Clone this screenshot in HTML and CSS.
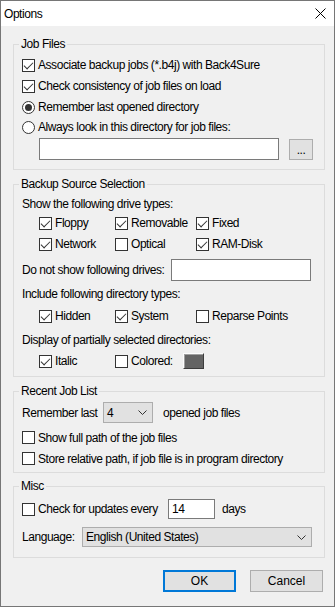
FILE: index.html
```html
<!DOCTYPE html>
<html lang="en">
<head>
    <meta charset="UTF-8">
    <meta name="viewport" content="width=device-width, initial-scale=1.0">
    <title>Options</title>
    <link rel="stylesheet" href="styles.css">
</head>
<body>
    <div class="window">
        <div class="titlebar">
            <span class="title">Options</span>
            <svg class="close" width="11" height="11" viewBox="0 0 11 11">
                <path d="M0.5 0.5 L10.5 10.5 M10.5 0.5 L0.5 10.5" stroke="#000" stroke-width="1" fill="none"/>
            </svg>
        </div>
        <div class="body">
            <fieldset class="group g-job">
                <legend>Job Files</legend>
                <div class="row"><span class="cb on"></span>Associate backup jobs (*.b4j) with Back4Sure</div>
                <div class="row gap1"><span class="cb on"></span>Check consistency of job files on load</div>
                <div class="row gap1"><span class="rb on"></span>Remember last opened directory</div>
                <div class="row"><span class="rb"></span>Always look in this directory for job files:</div>
                <div class="dir-row">
                    <span class="edit dir-edit"></span>
                    <span class="btn dots">...</span>
                </div>
            </fieldset>

            <fieldset class="group g-src">
                <legend>Backup Source Selection</legend>
                <div class="lbl first">Show the following drive types:</div>
                <div class="opt-grid drive-grid">
                    <div class="row"><span class="cb on"></span>Floppy</div>
                    <div class="row"><span class="cb on"></span>Removable</div>
                    <div class="row"><span class="cb on"></span>Fixed</div>
                    <div class="row"><span class="cb on"></span>Network</div>
                    <div class="row"><span class="cb"></span>Optical</div>
                    <div class="row"><span class="cb on"></span>RAM-Disk</div>
                </div>
                <div class="drives-row">
                    <span>Do not show following drives:</span>
                    <span class="edit drives-edit"></span>
                </div>
                <div class="lbl">Include following directory types:</div>
                <div class="opt-grid dir-grid">
                    <div class="row"><span class="cb on"></span>Hidden</div>
                    <div class="row"><span class="cb on"></span>System</div>
                    <div class="row"><span class="cb"></span>Reparse Points</div>
                </div>
                <div class="lbl">Display of partially selected directories:</div>
                <div class="opt-grid disp-grid">
                    <div class="row"><span class="cb on"></span>Italic</div>
                    <div class="row"><span class="cb"></span>Colored:<span class="swatch"></span></div>
                </div>
            </fieldset>

            <fieldset class="group g-recent">
                <legend>Recent Job List</legend>
                <div class="remember-row">
                    <span>Remember last</span>
                    <span class="combo count-combo">4
                        <svg class="chev" width="9" height="5" viewBox="0 0 9 5"><path d="M0.5 0.5 L4.5 4.5 L8.5 0.5" stroke="#333" fill="none"/></svg>
                    </span>
                    <span>opened job files</span>
                </div>
                <div class="row r21 gap4"><span class="cb"></span>Show full path of the job files</div>
                <div class="row r21"><span class="cb"></span>Store relative path, if job file is in program directory</div>
            </fieldset>

            <fieldset class="group g-misc">
                <legend>Misc</legend>
                <div class="update-row">
                    <span class="cb"></span>
                    <span>Check for updates every</span>
                    <span class="edit days-edit">14</span>
                    <span>days</span>
                </div>
                <div class="lang-row">
                    <span>Language:</span>
                    <span class="combo lang-combo">English (United States)
                        <svg class="chev" width="9" height="5" viewBox="0 0 9 5"><path d="M0.5 0.5 L4.5 4.5 L8.5 0.5" stroke="#333" fill="none"/></svg>
                    </span>
                </div>
            </fieldset>

            <div class="actions">
                <span class="btn push default">OK</span>
                <span class="btn push">Cancel</span>
            </div>
        </div>
    </div>
</body>
</html>
```

FILE: styles.css
```css
body {
    margin: 0;
    font-family: "Liberation Sans", Arial, sans-serif;
    font-size: 12px;
    letter-spacing: -0.45px;
    line-height: 16px;
    color: #000;
    background: #fff;
    white-space: nowrap;
}
.window {
    width: 335px;
    height: 607px;
    box-sizing: border-box;
    border: 1px solid #767676;
    background: #f0f0f0;
}
.titlebar {
    height: 25px;
    background: #fff;
    display: flex;
    align-items: center;
    justify-content: space-between;
    padding-left: 3px;
}
.title {
    font-size: 12px;
}
.close {
    margin-right: 8px;
}
.body {
    padding: 0 9px 0 12px;
}
.group {
    width: 312px;
    box-sizing: border-box;
    margin: 10px 0 0 0;
    padding: 0 8px;
    border: 1px solid #dcdcdc;
    min-width: 0;
}
.group legend {
    padding: 0 2px;
    margin-left: -3px;
    line-height: 16px;
}
.row {
    height: 20px;
    display: flex;
    align-items: center;
}
.row.gap1 {
    margin-top: 1px;
}
.row.r21 {
    height: 21px;
}
.row.gap4 {
    margin-top: 4px;
}
.cb, .rb {
    width: 13px;
    height: 13px;
    box-sizing: border-box;
    border: 1px solid #333;
    background: #fff;
    position: relative;
    flex: none;
    margin-right: 3px;
}
.cb.on::after {
    content: "";
    position: absolute;
    left: 3px;
    top: 0px;
    width: 4px;
    height: 8px;
    border: solid #333;
    border-width: 0 1px 1px 0;
    transform: rotate(45deg);
}
.rb {
    border-radius: 50%;
}
.rb.on::after {
    content: "";
    position: absolute;
    left: 2px;
    top: 2px;
    width: 7px;
    height: 7px;
    border-radius: 50%;
    background: #333;
}
.edit {
    display: block;
    box-sizing: border-box;
    background: #fff;
    border: 1px solid #7a7a7a;
}
.btn {
    display: flex;
    align-items: center;
    justify-content: center;
    box-sizing: border-box;
    background: #e1e1e1;
    border: 1px solid #adadad;
}

/* job files */
.g-job {
    padding-top: 3px;
    padding-bottom: 9px;
}
.dir-row {
    display: flex;
    align-items: flex-start;
    margin-top: 1px;
    padding-left: 17px;
}
.dir-edit {
    width: 240px;
    height: 22px;
}
.dots {
    width: 24px;
    height: 21px;
    margin: 1px 0 0 10px;
}

/* backup source */
.g-src {
    margin-top: 6px;
    padding-top: 2px;
    padding-bottom: 4px;
}
.lbl {
    height: 20px;
    display: flex;
    align-items: center;
    margin-top: 3px;
}
.lbl.first {
    height: 19px;
    margin-top: 0;
}
.opt-grid {
    display: grid;
    grid-template-columns: 76px 81px auto;
    grid-auto-rows: 21px;
    margin-left: 17px;
}
.dir-grid {
    margin-top: 2px;
}
.disp-grid {
    margin-top: 1px;
}
.drives-row {
    display: flex;
    align-items: center;
    justify-content: space-between;
    height: 22px;
    margin-top: 4px;
}
.drives-edit {
    width: 140px;
    height: 22px;
    margin-right: 5px;
}
.swatch {
    flex: none;
    width: 21px;
    height: 16px;
    box-sizing: border-box;
    margin-left: 10px;
    background: #646464;
    border: 1px solid;
    border-color: #fdfdfd #3c3c3c #3c3c3c #fdfdfd;
    box-shadow: inset 1px 1px 0 #a0a0a0;
}

/* recent jobs */
.g-recent {
    margin-top: 6px;
    padding-top: 3px;
    padding-bottom: 3px;
}
.remember-row {
    display: flex;
    align-items: center;
    height: 21px;
}
.combo {
    display: flex;
    align-items: center;
    justify-content: space-between;
    box-sizing: border-box;
    background: #e1e1e1;
    border: 1px solid #adadad;
    padding: 0 5px 0 3px;
}
.count-combo {
    width: 50px;
    height: 21px;
    margin: 0 10px 0 0;
}
.remember-row > span:first-child {
    width: 81px;
}
.chev {
    flex: none;
}

/* misc */
.g-misc {
    margin-top: 5px;
    padding-top: 5px;
    padding-bottom: 10px;
}
.update-row {
    display: flex;
    align-items: center;
    height: 20px;
}
.update-row > span:nth-child(2) {
    width: 130px;
}
.days-edit {
    width: 47px;
    height: 20px;
    padding-left: 3px;
    margin-right: 7px;
    display: flex;
    align-items: center;
}
.lang-row {
    display: flex;
    align-items: center;
    height: 20px;
    margin-top: 8px;
}
.lang-row > span:first-child {
    width: 60px;
}
.lang-combo {
    width: 230px;
    height: 20px;
}

/* dialog buttons */
.actions {
    display: flex;
    justify-content: flex-end;
    gap: 14px;
    margin: 12px 2px 0 0;
    letter-spacing: 0;
}
.push {
    width: 73px;
    height: 22px;
}
.push.default {
    border: 2px solid #0078d7;
}
```
